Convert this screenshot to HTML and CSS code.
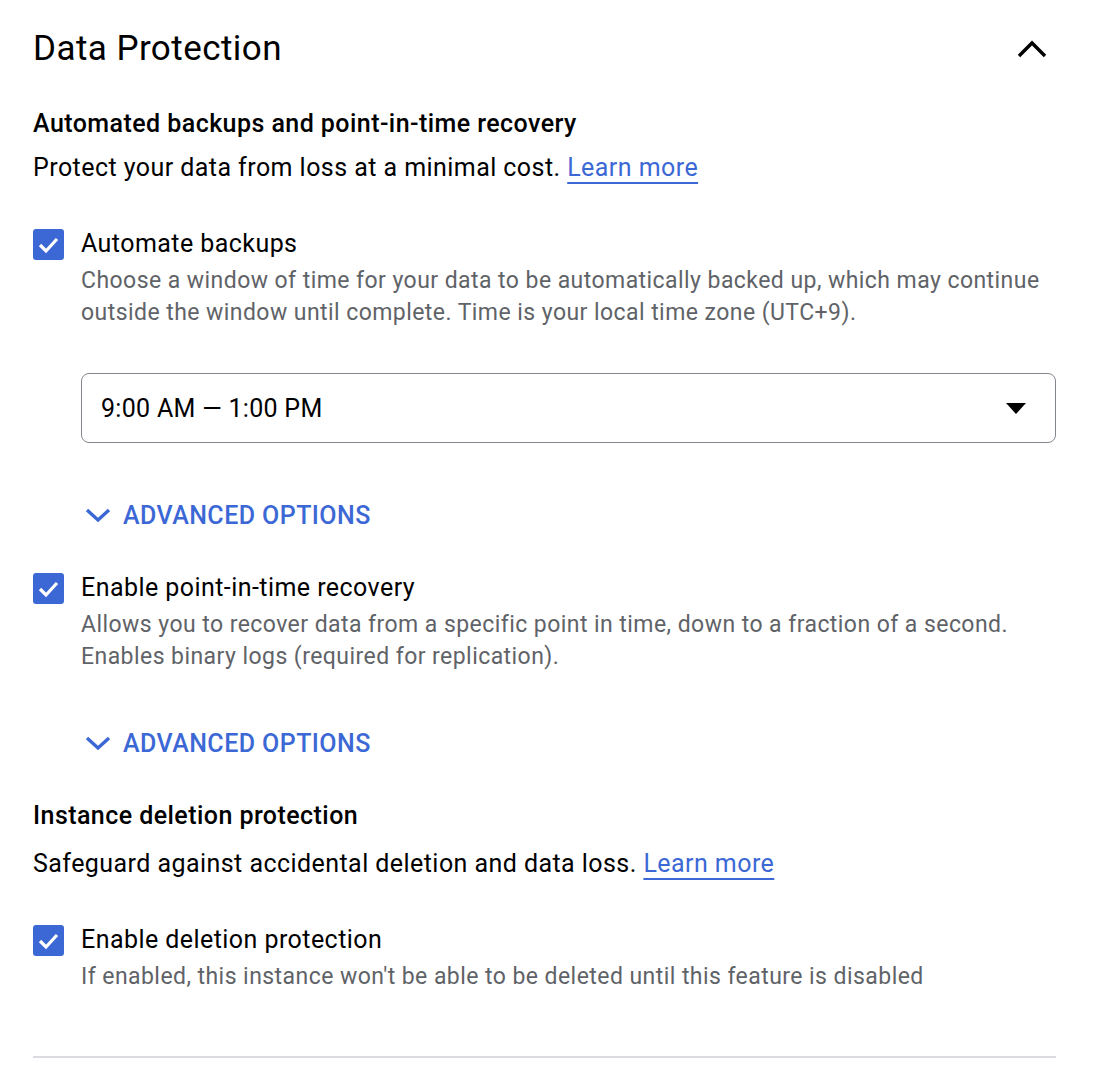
FILE: index.html
```html
<!DOCTYPE html>
<html>
<head>
<meta charset="utf-8">
<link rel="stylesheet" href="styles.css">
</head>
<body>
<div class="panel">
  <div class="panel-header">
    <h2 class="panel-title">Data Protection</h2>
    <svg class="collapse-icon" width="32" height="20" viewBox="0 0 32 20"><path d="M3 17 L16 4 L29 17" fill="none" stroke="#000" stroke-width="3.4"/></svg>
  </div>

  <h3 class="section-title">Automated backups and point-in-time recovery</h3>
  <p class="section-text">Protect your data from loss at a minimal cost. <a class="link">Learn more</a></p>

  <div class="check-row first">
    <span class="checkbox"><svg width="31" height="31" viewBox="0 0 31 31"><path d="M7 16 L13 22 L24 10" fill="none" stroke="#fff" stroke-width="3.2"/></svg></span>
    <div class="check-body">
      <div class="check-label">Automate backups</div>
      <div class="check-desc">Choose a window of time for your data to be automatically backed up, which may continue outside the window until complete. Time is your local time zone (UTC+9).</div>
      <div class="select">
        <span class="select-value">9:00 AM — 1:00 PM</span>
        <svg class="select-arrow" width="20" height="11" viewBox="0 0 20 11"><path d="M0 0 L20 0 L10 11 Z" fill="#000"/></svg>
      </div>
      <div class="advanced">
        <svg width="28" height="16" viewBox="0 0 28 16"><path d="M3 3 L14 13 L25 3" fill="none" stroke="#3c68d6" stroke-width="3.4"/></svg>
        <span>ADVANCED OPTIONS</span>
      </div>
    </div>
  </div>

  <div class="check-row second">
    <span class="checkbox"><svg width="31" height="31" viewBox="0 0 31 31"><path d="M7 16 L13 22 L24 10" fill="none" stroke="#fff" stroke-width="3.2"/></svg></span>
    <div class="check-body">
      <div class="check-label">Enable point-in-time recovery</div>
      <div class="check-desc">Allows you to recover data from a specific point in time, down to a fraction of a second.<br>Enables binary logs (required for replication).</div>
      <div class="advanced advanced-2">
        <svg width="28" height="16" viewBox="0 0 28 16"><path d="M3 3 L14 13 L25 3" fill="none" stroke="#3c68d6" stroke-width="3.4"/></svg>
        <span>ADVANCED OPTIONS</span>
      </div>
    </div>
  </div>

  <h3 class="section-title second-section">Instance deletion protection</h3>
  <p class="section-text">Safeguard against accidental deletion and data loss. <a class="link">Learn more</a></p>

  <div class="check-row third">
    <span class="checkbox"><svg width="31" height="31" viewBox="0 0 31 31"><path d="M7 16 L13 22 L24 10" fill="none" stroke="#fff" stroke-width="3.2"/></svg></span>
    <div class="check-body">
      <div class="check-label">Enable deletion protection</div>
      <div class="check-desc">If enabled, this instance won't be able to be deleted until this feature is disabled</div>
    </div>
  </div>

  <div class="divider"></div>
</div>
</body>
</html>
```

FILE: styles.css
```css
* { box-sizing: border-box; }
html, body { margin: 0; padding: 0; background: #fff; }
body {
  font-family: Roboto, "Liberation Sans", sans-serif;
  color: #202124;
  width: 1096px;
  letter-spacing: 0.44px;
}
.panel {
  padding: 0 40px 0 33px;
}
.panel-header {
  display: flex;
  justify-content: space-between;
  align-items: center;
  height: 97px;
}
.panel-title {
  margin: 0;
  font-size: 35px;
  font-weight: 400;
  color: #000;
}
.collapse-icon { margin-right: 8px; }
.section-title {
  margin: 0;
  font-size: 25px;
  font-weight: 500;
  color: #000;
  line-height: 32px;
  margin-top: 11px;
}
.section-text {
  margin: 12px 0 0 0;
  font-size: 25px;
  line-height: 32px;
  color: #000;
}
.link {
  color: #3c68d6;
  text-decoration: underline;
  text-underline-offset: 6px;
  text-decoration-thickness: 1.5px;
}
.check-row {
  display: flex;
  gap: 17px;
}
.check-row.first { margin-top: 44px; }
.check-row.second { margin-top: 42px; }
.check-row.third { margin-top: 44px; }
.checkbox {
  flex: none;
  width: 31px;
  height: 31px;
  background: #3c68d6;
  border-radius: 3px;
  margin-top: 1px;
}
.checkbox svg { display: block; }
.check-body { flex: 1; }
.check-label {
  font-size: 25px;
  line-height: 32px;
  color: #000;
}
.check-desc {
  margin-top: 5px;
  font-size: 23px;
  line-height: 32px;
  color: #5f6368;
}
.select {
  margin-top: 44px;
  height: 70px;
  border: 1.5px solid #80868b;
  border-radius: 8px;
  display: flex;
  align-items: center;
  justify-content: space-between;
  padding: 0 29px 0 19px;
}
.select-value {
  font-size: 25px;
  letter-spacing: 0.3px;
  color: #000;
}
.advanced {
  display: flex;
  align-items: center;
  gap: 11px;
  margin-top: 57px;
  margin-left: 3px;
  color: #3c68d6;
  font-size: 25px;
  font-weight: 500;
  height: 30px;
}
.advanced svg { display: block; }
.advanced-2 { margin-top: 55px; }
.second-section { margin-top: 42px; }
.second-section + .section-text { margin-top: 16px; }
.divider {
  margin-top: 63px;
  height: 2px;
  background: #dadce0;
}
```
